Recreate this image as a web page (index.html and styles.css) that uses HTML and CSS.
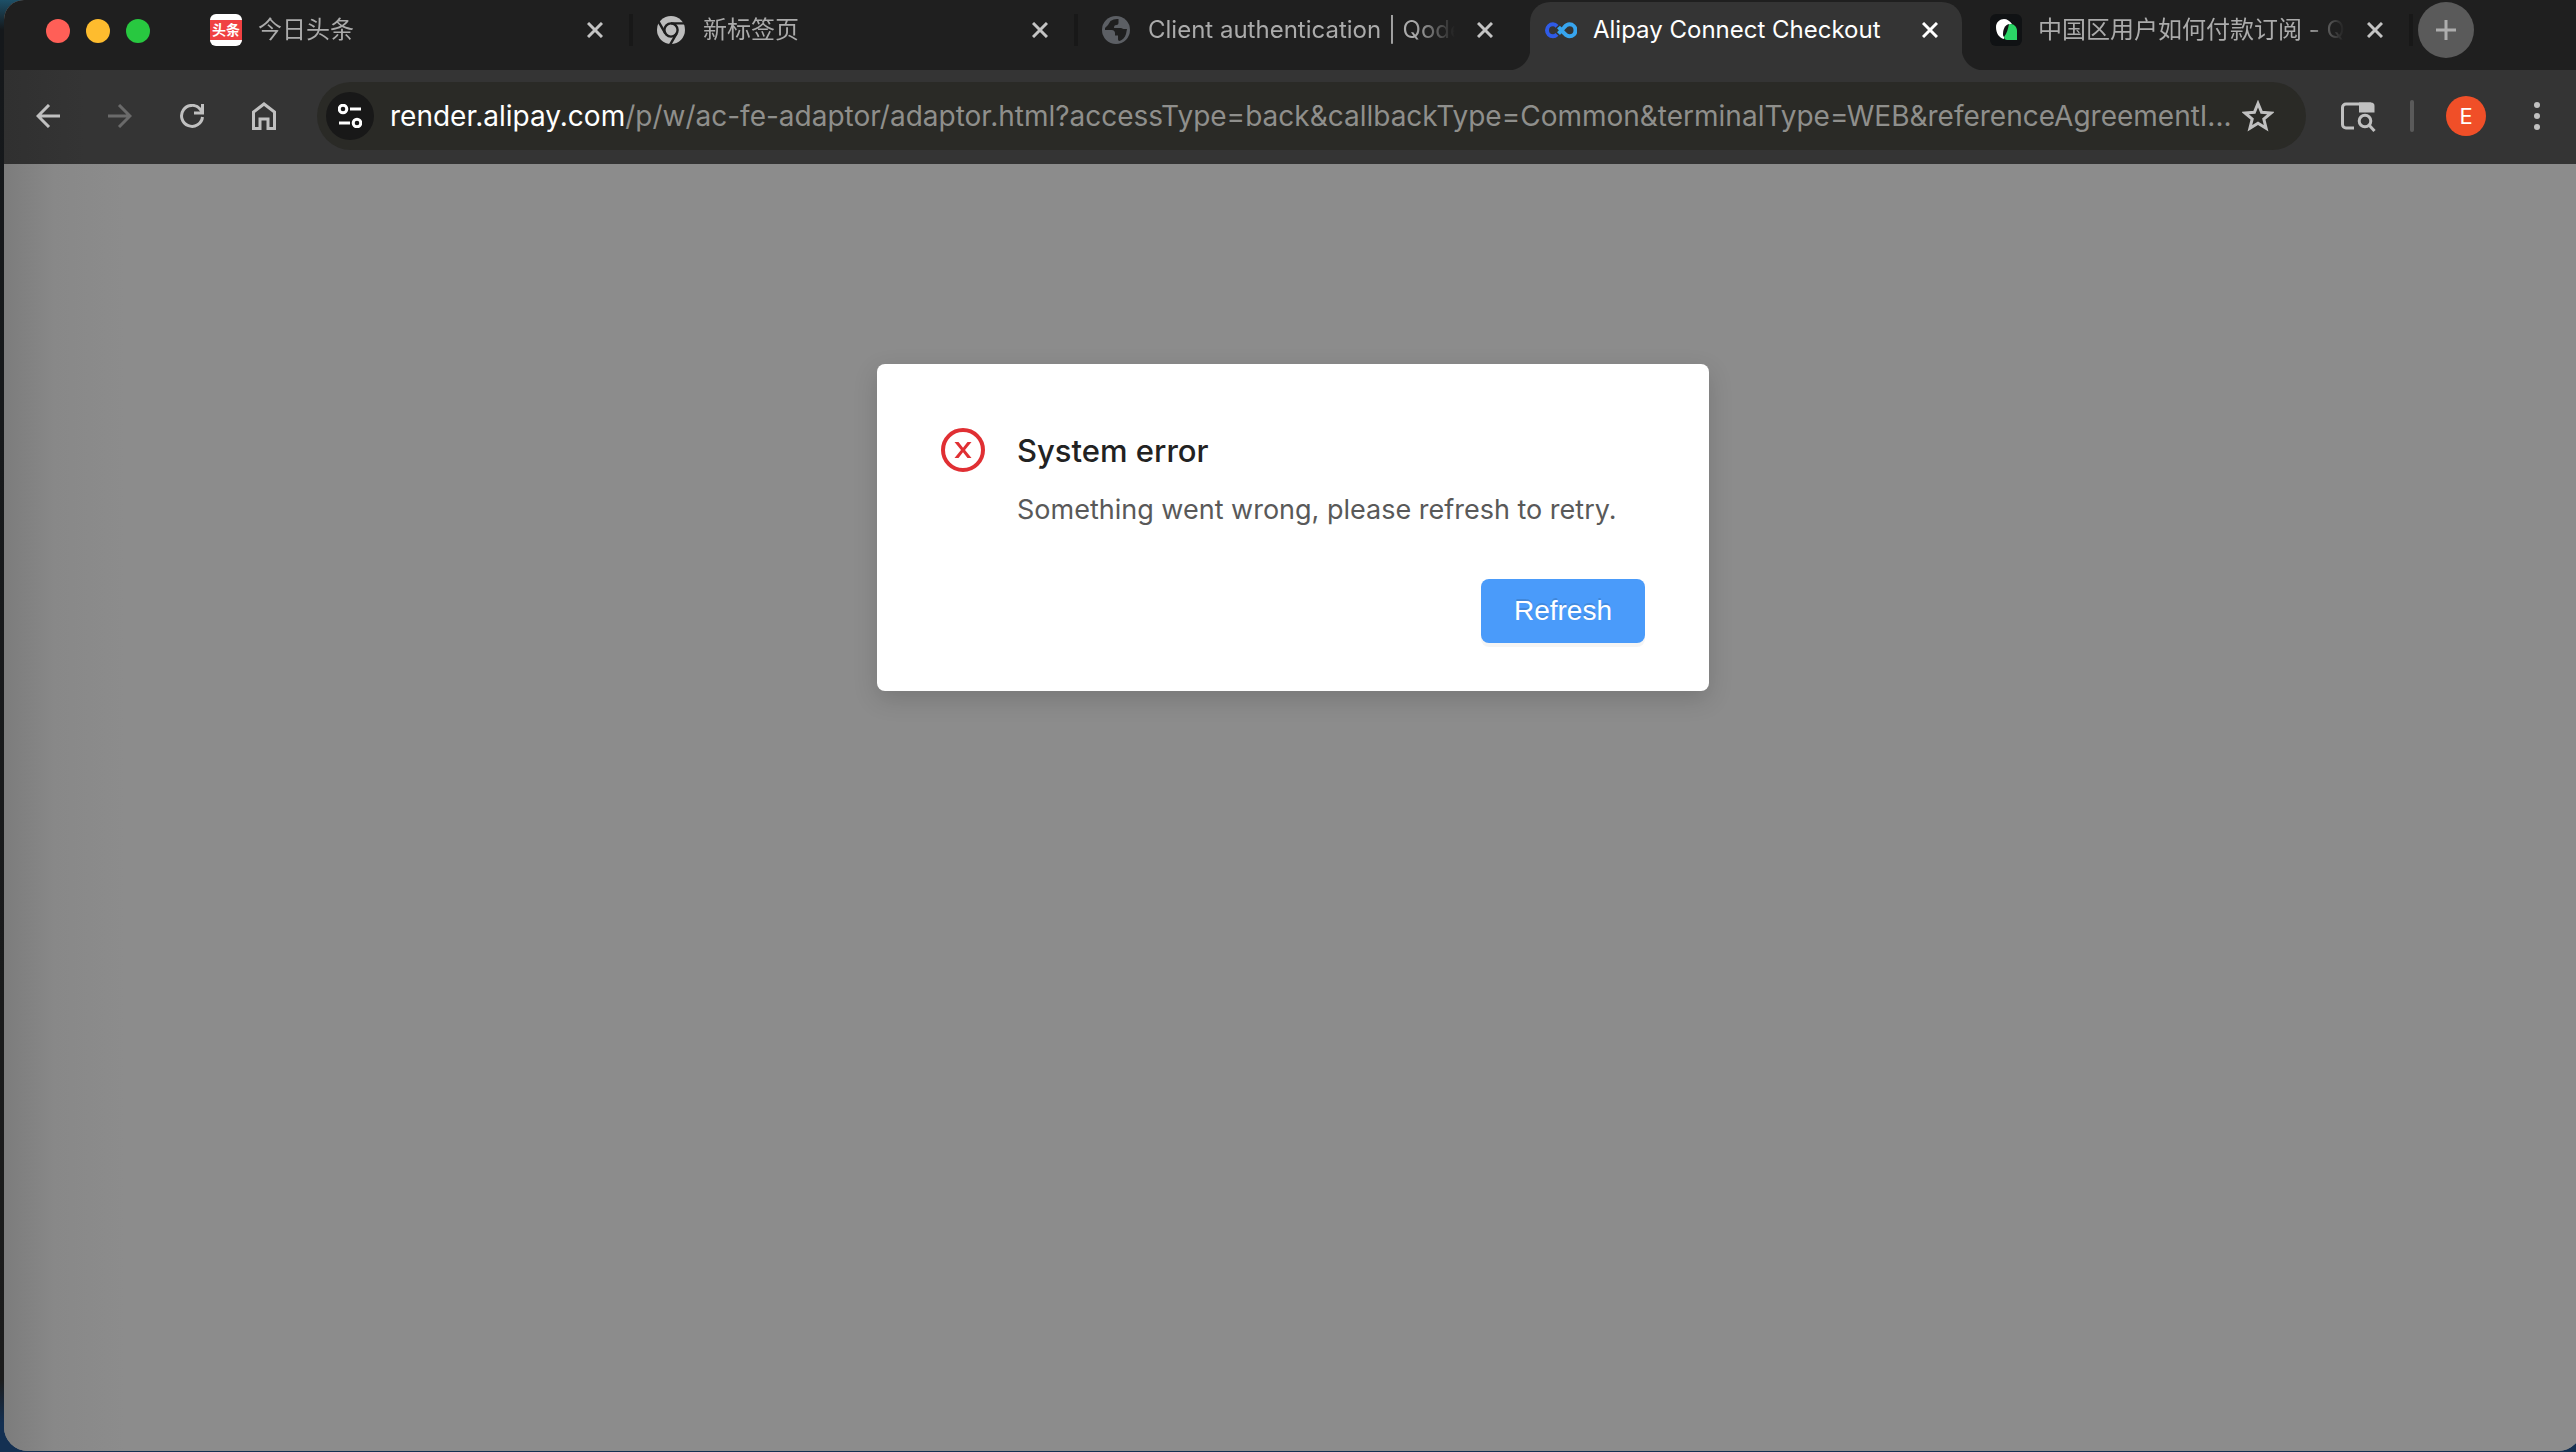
FILE: index.html
```html
<!doctype html>
<html lang="zh-CN">
<head>
  <meta charset="UTF-8" />
  <title>Alipay Connect Checkout</title>
  <meta name="viewport" content="width=device-width, initial-scale=1.0">
  <link rel="stylesheet" href="styles.css">
</head>
<body>
  <div class="window">
    <header class="tabstrip">
      <div class="lights">
        <button class="light close" aria-label="Close window"></button>
        <button class="light minimize" aria-label="Minimize window"></button>
        <button class="light zoom" aria-label="Zoom window"></button>
      </div>
      <nav class="tabs">
        <div class="tab">
          <span class="favicon toutiao">头条</span>
          <span class="tab-title">今日头条</span>
          <button class="tab-close" aria-label="Close tab"><svg viewBox="0 0 16 16"><path d="M1 1l14 14M15 1L1 15"/></svg></button>
        </div>
        <div class="tab">
          <svg class="favicon" viewBox="0 0 32 32">
            <circle cx="16" cy="16" r="14" fill="#bdbdbd"/>
            <g fill="none" stroke="#1f1f1f" stroke-width="2.4">
              <circle cx="16" cy="16" r="6.6"/>
              <path d="M16 9.4H30M10.3 19.3L3.3 7.2M21.7 19.3L14.7 31.4"/>
            </g>
          </svg>
          <span class="tab-title">新标签页</span>
          <button class="tab-close" aria-label="Close tab"><svg viewBox="0 0 16 16"><path d="M1 1l14 14M15 1L1 15"/></svg></button>
        </div>
        <div class="tab no-line">
          <svg class="favicon" viewBox="0 0 32 32">
            <circle cx="16" cy="16" r="14" fill="#5c5f64"/>
            <path fill="#1f1f1f" d="M18.500 5c-3-.4-5.500.5-8 2L8 11l-3 3v2h6.500c2.500 0 3.500 1.500 3.500 3v2.500h3V25c0 1 .5 2 1.500 2 3-1 5.500-3.500 6.500-7l1-5h-3.500c-1 0-1.500-1-2.500-1h-7c0-2 .5-3 2.500-3 1.500 0 2-1 2-2.500z"/>
          </svg>
          <span class="tab-title">Client authentication | Qoder</span>
          <button class="tab-close" aria-label="Close tab"><svg viewBox="0 0 16 16"><path d="M1 1l14 14M15 1L1 15"/></svg></button>
        </div>
        <div class="tab active">
          <svg class="favicon" viewBox="0 0 32 32">
            <g fill="none" stroke-width="4">
              <path stroke="#2f5be7" d="M12 12.300C10.800 11 9.500 10.300 8 10.300a6 6 0 0 0 0 12c1.500 0 2.800-.7 4-2"/>
              <path stroke="#37a5ef" d="M13.500 13l5.800 6.300c1.500 1.800 3.200 3 5.200 3a6 6 0 0 0 0-12c-2 0-3.700 1.200-5.200 3L13.500 19.600"/>
            </g>
          </svg>
          <span class="tab-title">Alipay Connect Checkout</span>
          <button class="tab-close" aria-label="Close tab"><svg viewBox="0 0 16 16"><path d="M1 1l14 14M15 1L1 15"/></svg></button>
        </div>
        <div class="tab">
          <svg class="favicon" viewBox="0 0 32 32">
            <rect width="32" height="32" rx="6" fill="#101214"/>
            <path fill="#fff" d="M6 13c0-5 4-8 8-8 3 0 6 2 8 5-5 0-8 5-8 15-5-1-8-6-8-12z"/>
            <path fill="#2bd566" d="M14 22c0-8 3-12 7-12 3 0 6 3 6 7v9h-9c-3 0-4-1-4-4z"/>
            <path fill="#101214" d="M13 20c0-5 2-9 6-10-1 5-2 9-5 13-1-1-1-2-1-3z"/>
          </svg>
          <span class="tab-title">中国区用户如何付款订阅 - Qoder</span>
          <button class="tab-close" aria-label="Close tab"><svg viewBox="0 0 16 16"><path d="M1 1l14 14M15 1L1 15"/></svg></button>
        </div>
      </nav>
      <button class="new-tab" aria-label="New tab"><svg viewBox="0 0 20 20"><path d="M10 0v20M0 10h20"/></svg></button>
    </header>

    <div class="toolbar">
      <div class="nav-buttons">
        <button class="icon-button" aria-label="Back"><svg viewBox="0 0 24 24"><path d="M24 12H2M13 1L2 12l11 11"/></svg></button>
        <button class="icon-button" aria-label="Forward" disabled><svg viewBox="0 0 24 24"><path d="M0 12h22M11 1l11 11-11 11"/></svg></button>
        <button class="icon-button" aria-label="Reload"><svg viewBox="0 0 24 24"><path d="M22.500 13A10.500 10.500 0 1 1 20 5l2 3"/><path d="M22.500 0v9H14"/></svg></button>
        <button class="icon-button" aria-label="Home"><svg viewBox="0 0 24 28"><path d="M1.500 26.500V10L12 2l10.500 8v16.500H16V17H8v9.500z"/></svg></button>
      </div>
      <div class="omnibox">
        <button class="site-info" aria-label="View site information">
          <svg viewBox="0 0 24 24"><circle cx="5" cy="5" r="3.800"/><path d="M12 5h11"/><circle cx="19" cy="19" r="3.800"/><path d="M1 19h11"/></svg>
        </button>
        <div class="url"><span class="host">render.alipay.com</span>/p/w/ac-fe-adaptor/adaptor.html?accessType=back&amp;callbackType=Common&amp;terminalType=WEB&amp;referenceAgreementI...</div>
        <button class="bookmark" aria-label="Bookmark this tab"><svg viewBox="0 0 32 32"><path d="M16 3.500l3.600 8.800 9.400.7-7.200 6 2.300 9.200L16 23.200l-8.100 5 2.300-9.200L3 13l9.400-.7z"/></svg></button>
      </div>
      <button class="side-search" aria-label="Search side panel">
        <svg viewBox="0 0 36 32"><path d="M14 28H6a3.500 3.500 0 0 1-3.500-3.500v-17A3.500 3.500 0 0 1 6 4h25"/><path class="solid" d="M19 2.500h12a3.500 3.500 0 0 1 3.500 3.500v6.500H19z"/><circle cx="25" cy="21" r="5.800"/><path d="M29 25l5.500 6"/></svg>
      </button>
      <span class="divider"></span>
      <button class="avatar" aria-label="Profile">E</button>
      <button class="menu" aria-label="Menu"><svg viewBox="0 0 6 30"><circle cx="3" cy="4" r="3"/><circle cx="3" cy="15" r="3"/><circle cx="3" cy="26" r="3"/></svg></button>
    </div>

    <main class="page">
      <section class="modal" role="dialog" aria-labelledby="modal-title">
        <svg class="modal-icon" viewBox="0 0 44 44"><circle cx="22" cy="22" r="20"/><path d="M13.500 14h4l4.500 5.800 4.500-5.800h4L24 22l6.500 8h-4L22 24.200 17.500 30h-4l6.500-8z"/></svg>
        <div class="modal-body">
          <h1 id="modal-title">System error</h1>
          <p>Something went wrong, please refresh to retry.</p>
          <button class="refresh">Refresh</button>
        </div>
      </section>
    </main>
  </div>
</body>
</html>
```
FILE: styles.css
```css
html, body {
  margin: 0;
  padding: 0;
  height: 100%;
}
body {
  box-sizing: border-box;
  overflow: hidden;
  padding: 0 0 1px 4px;
  background: linear-gradient(#1d5068, #15181b 30px, #1c1c1c 95%, #143052 98%);
  font-family: Inter, "Noto Sans CJK SC", sans-serif;
  font-size: 28px;
}
button {
  margin: 0;
  padding: 0;
  border: 0;
  background: none;
  color: inherit;
  font: inherit;
}
svg {
  display: block;
  fill: none;
}

/* the window runs a little past the right edge of the screen */
.window {
  display: flex;
  flex-direction: column;
  height: 100%;
  margin-right: -6px;
  border-radius: 20px 0 24px 24px;
  overflow: hidden;
  background: #8c8c8c;
}

/* tab strip */
.tabstrip {
  display: flex;
  height: 70px;
  background: #1f1f1f;
  color: #ababab;
}
.lights {
  display: flex;
  gap: 16px;
  padding: 19px 36px 0 42px;
}
.light {
  width: 24px;
  height: 24px;
  border-radius: 50%;
}
.close {
  background: #ff5f57;
}
.minimize {
  background: #febc2e;
}
.zoom {
  background: #28c840;
}
.tabs {
  display: flex;
  flex: 0 1 2225px;
  min-width: 0;
}
.tab {
  position: relative;
  display: flex;
  flex: 1;
  align-items: center;
  box-sizing: border-box;
  min-width: 0;
  height: 60px;
  padding: 0 28px 0 24px;
  font-size: 24px;
}
.tab::after {
  content: "";
  position: absolute;
  right: -2px;
  top: 14px;
  width: 4px;
  height: 32px;
  background: #181818;
}
.no-line::after {
  display: none;
}
.favicon {
  flex: none;
  width: 32px;
  height: 32px;
}
.toutiao {
  box-sizing: border-box;
  border: solid #fff;
  border-width: 6px 0;
  border-radius: 6px;
  background: #f04142;
  color: #fff;
  font-size: 14px;
  font-weight: 700;
  line-height: 20px;
  text-align: center;
}
.tab-title {
  flex: 1;
  overflow: hidden;
  margin: 0 22px 0 16px;
  line-height: 36px;
  white-space: nowrap;
  -webkit-mask-image: linear-gradient(to left, transparent, #000 40px);
  mask-image: linear-gradient(to left, transparent, #000 40px);
}
.tab-close {
  width: 16px;
  height: 16px;
  color: #c4c4c4;
}
.tab-close svg, .new-tab svg {
  stroke: currentColor;
  stroke-width: 3;
}
.active {
  height: 70px;
  padding-bottom: 10px;
  color: #fff;
}
.active .tab-close {
  color: #fff;
}
.active .tab-title {
  -webkit-mask-image: none;
  mask-image: none;
}
.active .favicon, .active .tab-title, .active .tab-close {
  z-index: 1;
}
.active::before {
  content: "";
  position: absolute;
  inset: 2px 4px 0 9px;
  border-radius: 20px 20px 0 0;
  background: #343434;
}
/* flared feet of the active tab */
.active::after {
  inset: auto -18px 0 -13px;
  width: auto;
  height: 22px;
  background:
    radial-gradient(circle at 0 0, transparent 22px, #343434 23px) left / 22px 22px no-repeat,
    radial-gradient(circle at 100% 0, transparent 22px, #343434 23px) right / 22px 22px no-repeat;
}
.new-tab {
  display: grid;
  place-items: center;
  flex: none;
  width: 56px;
  height: 56px;
  margin: 2px 7px;
  border-radius: 50%;
  background: #5a5a5a;
  color: #adadad;
}
.new-tab svg {
  width: 20px;
}

/* toolbar */
.toolbar {
  display: flex;
  align-items: center;
  box-sizing: border-box;
  height: 94px;
  padding: 0 42px 2px 0;
  background: linear-gradient(to right, #303030, #343434 80px);
  color: #c0c0c0;
}
.nav-buttons {
  display: flex;
  align-items: center;
  gap: 48px;
  padding: 0 41px 0 32px;
}
.icon-button {
  width: 24px;
}
.icon-button:disabled {
  color: #6a6a6a;
}
.icon-button svg, .bookmark svg, .side-search svg {
  stroke: currentColor;
  stroke-width: 3;
}
.omnibox {
  display: flex;
  flex: 1;
  align-items: center;
  box-sizing: border-box;
  min-width: 0;
  height: 68px;
  padding: 0 32px 0 9px;
  border-radius: 34px;
  background: #2a2a26;
}
.site-info {
  display: grid;
  place-items: center;
  flex: none;
  width: 48px;
  height: 48px;
  border-radius: 50%;
  background: #181818;
}
.site-info svg {
  width: 24px;
  stroke: #fff;
  stroke-width: 3;
}
.url {
  flex: 1;
  overflow: hidden;
  margin-left: 16px;
  color: #8f8f8c;
  white-space: nowrap;
}
.host {
  color: #fff;
}
.bookmark {
  width: 32px;
}
.side-search {
  width: 36px;
  margin-left: 34px;
}
.side-search .solid {
  fill: currentColor;
  stroke: none;
}
.divider {
  width: 4px;
  height: 32px;
  margin: 0 32px 0 34px;
  border-radius: 2px;
  background: #5a5a5a;
}
.avatar {
  width: 40px;
  height: 40px;
  border-radius: 50%;
  background: #f04f28;
  color: #fff;
  font-size: 22px;
}
.menu {
  width: 6px;
  margin-left: 48px;
}
.menu svg {
  fill: currentColor;
}

/* page */
.page {
  flex: 1;
  padding-top: 200px;
  background: linear-gradient(to right, #7c7c7c, #888 50px, #8c8c8c 120px);
}
.modal {
  display: flex;
  gap: 32px;
  box-sizing: border-box;
  width: 832px;
  margin: 0 auto;
  padding: 64px 64px 48px;
  border-radius: 8px;
  background: #fff;
  box-shadow: 0 8px 24px rgba(0, 0, 0, .15);
}
.modal-icon {
  flex: none;
  width: 44px;
  height: 44px;
  stroke: #e02f33;
  stroke-width: 4;
}
.modal-icon path {
  fill: #e02f33;
  stroke: none;
}
.modal-body {
  display: flex;
  flex: 1;
  flex-direction: column;
}
h1 {
  margin: 0;
  color: #222;
  font-size: 31px;
  font-weight: 500;
  line-height: 46px;
}
p {
  margin: 14px 0 47px;
  color: #595959;
  font-size: 27px;
  line-height: 44px;
}
.refresh {
  align-self: flex-end;
  min-width: 164px;
  height: 64px;
  padding: 0 32px;
  border-radius: 8px;
  background: #4a9bfa;
  box-shadow: 0 4px 0 rgba(0, 0, 0, .04);
  color: #fff;
  font-family: "Liberation Sans", sans-serif;
  text-shadow: 0 -2px 0 rgba(0, 0, 0, .12);
}
```
